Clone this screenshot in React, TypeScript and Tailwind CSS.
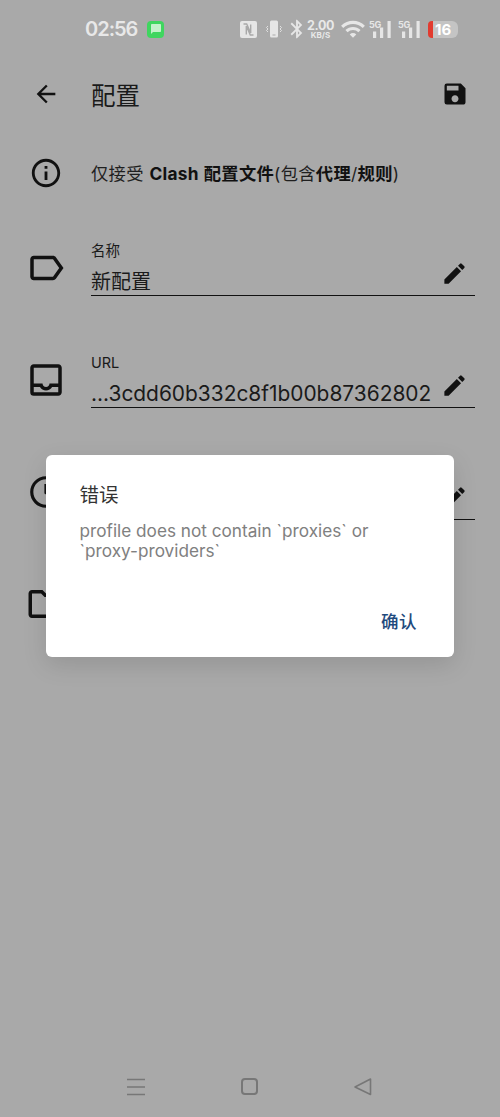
import React from "react";
import {
  MdArrowBack, MdSave, MdInfoOutline, MdOutlineLabel, MdOutlineInbox, MdEdit,
  MdAccessTime, MdOutlineFolder, MdBluetooth, MdWifi, MdChatBubble,
} from "react-icons/md";

const FONT = "font-['Inter','Noto_Sans_CJK_SC',sans-serif]";

function Signal() {
  return (
    <div className="relative w-[22px] h-[17px]">
      <div className="absolute left-0 top-[-1px] text-[9px] leading-[9px] font-bold text-[#e6e6e6] tracking-[-0.3px]">5G</div>
      <svg width="22" height="17" viewBox="0 0 22 17" className="absolute left-0 top-0" fill="#e6e6e6">
        <rect x="4" y="10.5" width="3.2" height="6.5" />
        <rect x="11" y="6.5" width="3.2" height="10.5" />
        <rect x="18.5" y="0" width="3.2" height="17" />
      </svg>
    </div>
  );
}

function StatusBar() {
  return (
    <div className="h-[58px] flex items-center pl-[85px] text-[#e8e8e8]">
      <span className="text-[20px] font-semibold leading-[24px] w-[52px] tracking-[-1px]">02:56</span>
      <div className="ml-[10px] w-[17px] h-[17px] rounded-[4px] bg-[#3fd65f] flex items-center justify-center">
        <MdChatBubble className="text-[#c4f2cb]" size={12} />
      </div>
      <svg width="17" height="17" viewBox="0 0 17 17" className="ml-[76px]">
        <rect width="17" height="17" rx="2" fill="#e6e6e6" />
        <path d="M3.5 3h3.2l4 9V3.5M13.5 14h-3.2l-4-9v8.5" fill="none" stroke="#a9a9a9" strokeWidth="1.4" />
      </svg>
      <svg width="18" height="18" viewBox="0 0 18 18" className="ml-[8px]" fill="none">
        <rect x="5" y="0.5" width="8" height="17" rx="1.5" fill="#e6e6e6" />
        <rect x="7.5" y="14.5" width="3" height="1" fill="#a9a9a9" />
        <path d="M3 6l-1.5 1.5L3 9l-1.5 1.5L3 12M15 6l1.5 1.5L15 9l1.5 1.5L15 12" stroke="#e6e6e6" strokeWidth="0.9" />
      </svg>
      <MdBluetooth className="ml-[3px] text-[#e6e6e6]" size={22} />
      <div className="ml-[-1px] w-[27px] flex flex-col items-center">
        <div className="text-[12.5px] font-bold leading-[11px] tracking-[-0.4px]">2.00</div>
        <div className="text-[8px] font-bold leading-[8px]">KB/S</div>
      </div>
      <MdWifi className="ml-[6px] text-[#e6e6e6]" size={26} />
      <div className="ml-[3px]"><Signal /></div>
      <div className="ml-[7px]"><Signal /></div>
      <div className="ml-[8px] w-[30px] h-[17px] rounded-[6px] bg-[#c4c4c4] flex items-center">
        <div className="w-[5px] h-[17px] rounded-l-[4px] bg-[#e23b30]" />
        <span className="ml-[2px] text-[15px] font-bold leading-[17px] text-white">16</span>
      </div>
    </div>
  );
}

function FieldRow({ icon, label = "", value = "", edit = true, latin = false }: { icon: React.ReactNode; label?: string; value?: string; edit?: boolean; latin?: boolean }) {
  return (
    <div className="h-[112px] flex items-start">
      <div className="w-[91px] h-[60px] flex items-center justify-center pt-[4px]">{icon}</div>
      <div className={`w-[384px] h-[60px] flex flex-col ${edit ? "border-b border-[#111]" : ""}`}>
        <div className="text-[14.5px] leading-[18px] h-[18px] text-[#1a1a1a] mt-[6px]">{label}</div>
        <div className="flex items-center mt-[9px] h-[26px]">
          <div className={`flex-1 leading-[26px] text-[#1a1a1a] whitespace-nowrap overflow-hidden ${latin ? "text-[20.9px]" : "text-[20px]"}`}>{value}</div>
          {edit && <MdEdit className="text-[#111] mr-[7px] mt-[-18px] shrink-0" size={27} />}
        </div>
      </div>
    </div>
  );
}

export default function App() {
  return (
    <div className={`relative w-[500px] h-[1117px] overflow-hidden bg-[#a9a9a9] flex flex-col ${FONT}`}>
      <StatusBar />
      <div className="h-[72px] flex items-center">
        <div className="w-[91px] flex justify-center"><MdArrowBack className="text-[#111]" size={28} /></div>
        <div className="flex-1 text-[24.5px] leading-[32px] text-[#1a1a1a] mt-[3px]">配置</div>
        <MdSave className="text-[#111] mr-[31px]" size={28} />
      </div>
      <div className="h-[86px] mb-[20px] flex items-center">
        <div className="w-[91px] flex justify-center"><MdInfoOutline className="text-[#111]" size={34} /></div>
        <div className="text-[17.3px] leading-[24px] text-[#1f1f1f] mt-[1px] whitespace-nowrap tracking-[0.3px] [word-spacing:0.5px]">
          仅接受 <b className="font-bold text-[#111]">Clash 配置文件</b>(包含<b className="font-bold text-[#111]">代理</b>/<b className="font-bold text-[#111]">规则</b>)
        </div>
      </div>
      <FieldRow icon={<MdOutlineLabel className="text-[#111]" size={42} />} label="名称" value="新配置" />
      <FieldRow icon={<MdOutlineInbox className="text-[#111]" size={42} />} label="URL" value="...3cdd60b332c8f1b00b87362802" latin />
      <FieldRow icon={<MdAccessTime className="text-[#111]" size={38} />} />
      <FieldRow icon={<MdOutlineFolder className="text-[#111]" size={42} />} edit={false} />

      <div className="absolute bottom-[0px] left-0 w-full h-[62px]">
        <svg width="18" height="18" viewBox="0 0 18 18" className="absolute left-[127px] top-[23px]" stroke="#777" strokeWidth="1.5">
          <path d="M0 1.5h18M0 9h18M0 16.5h18" />
        </svg>
        <div className="absolute left-[241px] top-[23px] w-[17px] h-[17px] border-2 border-[#777] rounded-[4px]" />
        <svg width="18" height="18" viewBox="0 0 18 18" className="absolute left-[354px] top-[23px]" fill="none" stroke="#777" strokeWidth="1.6" strokeLinejoin="round">
          <path d="M16.5 1v15.5L1 9z" />
        </svg>
      </div>

      <div className="absolute left-[46px] top-[455px] w-[408px] h-[202px] bg-white rounded-[6px] shadow-[0_8px_24px_rgba(0,0,0,0.12)] flex flex-col pl-[33.5px] pr-[37px]">
        <div className="mt-[27px] text-[19.5px] leading-[26px] text-[#333]">错误</div>
        <div className="mt-[13px] w-[310px] text-[17.2px] leading-[20px] text-[#808080]">profile does not contain `proxies` or `proxy-providers`</div>
        <div className="mt-auto mb-[23px] self-end text-[17.5px] leading-[24px] font-medium text-[#1f4a7d] tracking-[0.5px]">确认</div>
      </div>
    </div>
  );
}
